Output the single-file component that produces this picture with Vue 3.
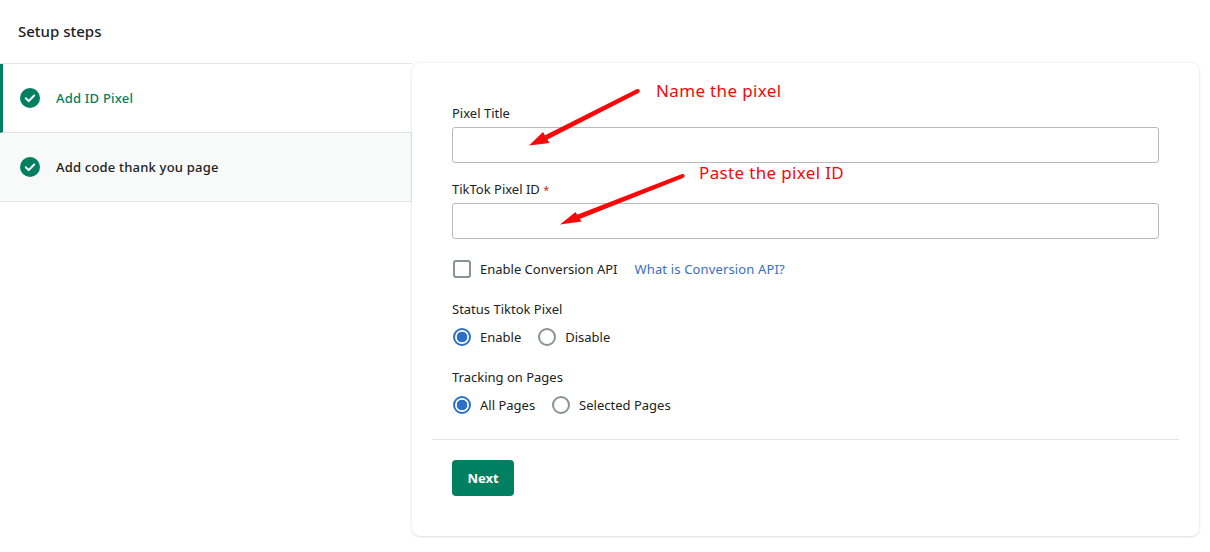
<script setup>
const steps = [
  { label: 'Add ID Pixel', active: true },
  { label: 'Add code thank you page', active: false }
]
</script>

<template>
  <div class="page">
    <aside class="side">
      <h2 class="side-title">Setup steps</h2>
      <div v-for="s in steps" :key="s.label" class="step" :class="{ active: s.active }">
        <svg class="check" width="20" height="20" viewBox="0 0 20 20">
          <circle cx="10" cy="10" r="10" fill="#008060" />
          <path d="M5.8 10.3l2.9 2.8 5.500-5.600" fill="none" stroke="#fff" stroke-width="2" stroke-linecap="round" stroke-linejoin="round" />
        </svg>
        <span>{{ s.label }}</span>
      </div>
    </aside>

    <main class="card">
      <div class="form">
        <label class="label">Pixel Title</label>
        <div class="input"></div>
        <label class="label second">TikTok Pixel ID <span class="req">*</span></label>
        <div class="input"></div>

        <div class="conv">
          <span class="checkbox"></span>
          <span>Enable Conversion API</span>
          <a class="link">What is Conversion API?</a>
        </div>

        <div class="label status">Status Tiktok Pixel</div>
        <div class="radios">
          <span class="radio on"></span><span class="rtext">Enable</span>
          <span class="radio"></span><span class="rtext">Disable</span>
        </div>

        <div class="label status">Tracking on Pages</div>
        <div class="radios">
          <span class="radio on"></span><span class="rtext">All Pages</span>
          <span class="radio"></span><span class="rtext">Selected Pages</span>
        </div>
      </div>
      <div class="divider"></div>
      <div class="foot"><button class="next">Next</button></div>
    </main>

    <svg class="arrows" width="1210" height="552" viewBox="0 0 1210 552">
      <g fill="#f80808">
        <path d="M637 89L639 89.200L640 91.200L638.500 93L547 139.800L545 135.300Z" />
        <path d="M682 174L684 174.200L684.800 176.300L683 178L579 219.300L577 214.700Z" />
        <path d="M529 145.500L543 132L549.500 143Z" />
        <path d="M560 224.500L575.500 212L581.500 221.500Z" />
      </g>
    </svg>
    <div class="note note1">Name the pixel</div>
    <div class="note note2">Paste the pixel ID</div>
  </div>
</template>

<style scoped>
.page {
  position: relative;
  display: flex;
  width: 1210px;
  height: 552px;
  overflow: hidden;
  background: #fff;
  color: #202223;
  font-family: "Noto Sans", "Open Sans", sans-serif;
  font-size: 13px;
}
.side {
  width: 412px;
  flex: none;
}
.side-title {
  margin: 0;
  padding: 21px 0 0 18px;
  height: 42px;
  font-size: 15px;
  line-height: 21px;
  font-weight: 500;
  border-bottom: 1px solid #e4e5e7;
}
.step {
  display: flex;
  align-items: center;
  gap: 16px;
  height: 68px;
  padding-left: 20px;
  border-bottom: 1px solid #e1e3e5;
  border-right: 1px solid #e8eaeb;
  background: #f8faf9;
  font-weight: 500;
  font-size: 13px;
  letter-spacing: .2px;
}
.step.active {
  background: #fff;
  color: #008060;
  border-right: 0;
  padding-left: 17px;
  border-left: 3px solid #008060;
}
.check { flex: none; }
.card {
  width: 787px;
  height: 473px;
  margin-top: 63px;
  box-sizing: border-box;
  flex: none;
  background: #fff;
  border-radius: 8px;
  box-shadow: 0 0 3px rgba(63, 63, 68, .12), 0 1px 2px rgba(63, 63, 68, .12);
  padding: 40px 20px 0;
}
.form { padding: 0 20px; }
.label {
  display: block;
  font-size: 13px;
  line-height: 20px;
  height: 24px;
}
.second { margin-top: 16px; }
.req { color: #d72c0d; font-size: 11px; }
.input {
  height: 36px;
  box-sizing: border-box;
  border: 1px solid #b9babb;
  border-radius: 3px;
  background: #fff;
}
.conv {
  display: flex;
  align-items: center;
  margin-top: 20px;
  height: 20px;
}
.checkbox {
  width: 18px;
  height: 18px;
  box-sizing: border-box;
  border: 2px solid #8c9196;
  border-radius: 3px;
  margin: 0 9px 0 1px;
}
.link {
  margin-left: 17px;
  color: #3a6cc8;
  letter-spacing: .15px;
}
.status { margin-top: 20px; height: 28px; line-height: 20px; }
.radios {
  display: flex;
  align-items: center;
  height: 20px;
  padding-left: 1px;
}
.radio {
  width: 18px;
  height: 18px;
  box-sizing: border-box;
  border: 2px solid #8c9196;
  border-radius: 50%;
  margin-right: 9px;
  flex: none;
}
.radio.on {
  border-color: #2c6ecb;
  background: radial-gradient(circle, #2c6ecb 0 5px, #fff 5.6px);
}
.rtext { margin-right: 17px; }
.divider {
  height: 1px;
  background: #e1e3e5;
  margin-top: 24px;
}
.foot { padding: 20px 20px 0; }
.next {
  width: 62px;
  height: 36px;
  border: 0;
  border-radius: 4px;
  background: #008060;
  color: #fff;
  font-family: inherit;
  font-size: 13px;
  font-weight: 700;
  padding: 0;
}
.arrows {
  position: absolute;
  left: 0;
  top: 0;
  pointer-events: none;
}
.note {
  position: absolute;
  color: #f80808;
  font-size: 17px;
  line-height: 22px;
  letter-spacing: .35px;
}
.note1 { left: 656px; top: 80px; }
.note2 { left: 699px; top: 162px; }
</style>
